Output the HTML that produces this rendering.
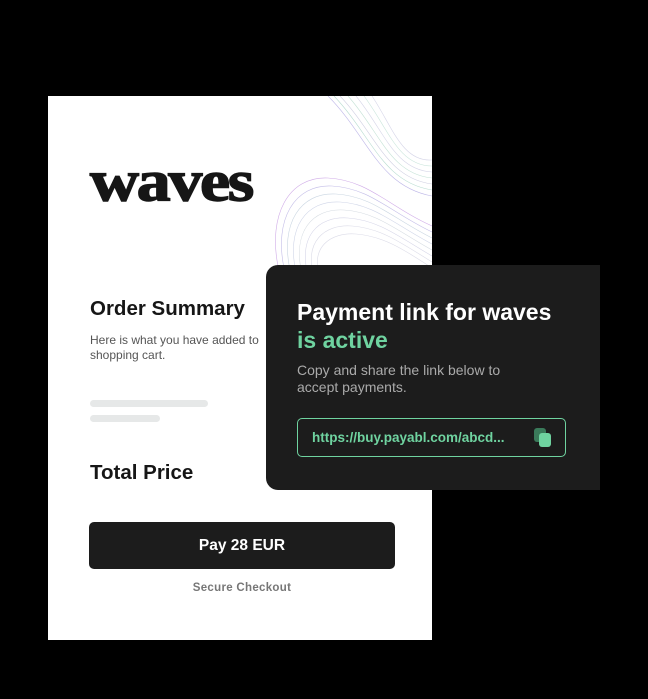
<!DOCTYPE html>
<html><head><style>
body{margin:0;width:648px;height:699px;background:#000;position:relative;overflow:hidden;font-family:"Liberation Sans",sans-serif}
.w{position:absolute;left:48px;top:96px;width:384px;height:544px;background:#fff;overflow:hidden}
.logo{position:absolute;left:42px;top:52px;font-family:"Liberation Serif",serif;font-weight:bold;font-size:60px;letter-spacing:-2px;color:#161616;transform:scale(1.13,0.97);transform-origin:left top;-webkit-text-stroke:1.5px #161616}
.h{position:absolute;left:42px;font-weight:bold;color:#161616;font-size:20.5px}
.d{position:absolute;left:266px;top:265px;width:334px;height:225px;background:#1c1c1c;border-radius:12px 0 0 12px}
</style></head><body>
<div class="w">
<svg style="position:absolute;left:220px;top:0" width="164" height="180" viewBox="0 0 164 180" fill="none">
<g stroke-width="0.6" opacity="0.75">
<path d="M60 0 C100 40 110 90 164 100" stroke="#a9a0e0"/>
<path d="M66 0 C104 40 114 86 164 94" stroke="#9fd0c0"/>
<path d="M72 0 C108 38 118 82 164 88" stroke="#c0c0d8"/>
<path d="M80 0 C112 36 122 78 164 82" stroke="#b0d8c8"/>
<path d="M88 0 C116 34 126 74 164 76" stroke="#c8c8e0"/>
<path d="M96 0 C120 32 130 70 164 70" stroke="#b8ddd0"/>
<path d="M104 0 C124 30 134 66 164 64" stroke="#c8c8e0"/>
<path d="M10 170 C0 120 20 80 60 82 C100 84 120 110 164 130" stroke="#c090e0"/>
<path d="M16 172 C6 124 26 88 64 90 C102 92 122 116 164 136" stroke="#b0a8e0"/>
<path d="M22 174 C12 128 32 96 68 98 C104 100 124 122 164 142" stroke="#b8c8d8"/>
<path d="M28 176 C18 132 38 104 72 106 C106 108 126 128 164 148" stroke="#c0c8e0"/>
<path d="M34 178 C24 136 44 112 76 114 C108 116 128 134 164 154" stroke="#c8d0d8"/>
<path d="M40 180 C30 140 50 120 80 122 C110 124 130 140 164 160" stroke="#c8c8e0"/>
<path d="M46 180 C36 146 56 128 84 130 C112 132 132 146 164 166" stroke="#d0d0e0"/>
<path d="M52 180 C42 152 62 136 88 138 C114 140 134 152 164 172" stroke="#d0d0e0"/>
</g></svg>
<div class="logo">waves</div>
<div class="h" style="top:201px">Order Summary</div>
<div style="position:absolute;left:42px;top:237px;font-size:12px;line-height:15px;color:#555">Here is what you have added to<br>shopping cart.</div>
<div style="position:absolute;left:42px;top:304px;width:118px;height:7px;border-radius:4px;background:#e6e8e8"></div>
<div style="position:absolute;left:42px;top:319px;width:70px;height:7px;border-radius:4px;background:#e6e8e8"></div>
<div class="h" style="top:365px">Total Price</div>
<div style="position:absolute;left:41px;top:426px;width:306px;height:47px;border-radius:5px;background:#1c1c1c;color:#fff;font-size:15.5px;font-weight:bold;text-align:center;line-height:47px">Pay 28 EUR</div>
<div style="position:absolute;left:41px;top:486px;width:306px;text-align:center;font-size:11.5px;letter-spacing:0.3px;font-weight:bold;color:#777">Secure Checkout</div>
</div>
<div class="d">
<div style="position:absolute;left:31px;top:33px;color:#fff;font-size:23px;font-weight:bold;line-height:28px">Payment link for waves<br><span style="color:#6fd3a0">is active</span></div>
<div style="position:absolute;left:31px;top:97px;color:#aaa;font-size:14px;line-height:17px">Copy and share the link below to<br>accept payments.</div>
<div style="position:absolute;left:31px;top:153px;width:269px;height:39px;border:1px solid #6fd3a0;border-radius:5px;box-sizing:border-box">
<div style="position:absolute;left:14px;top:11px;color:#6fd3a0;font-size:13.5px;font-weight:bold">https://buy.payabl.com/abcd...</div>
<div style="position:absolute;left:236px;top:9px;width:12px;height:14px;border-radius:3px;background:#3a7a5a"></div>
<div style="position:absolute;left:241px;top:14px;width:12px;height:14px;border-radius:3px;background:#6fd3a0"></div>
</div>
</div>
</body></html>
